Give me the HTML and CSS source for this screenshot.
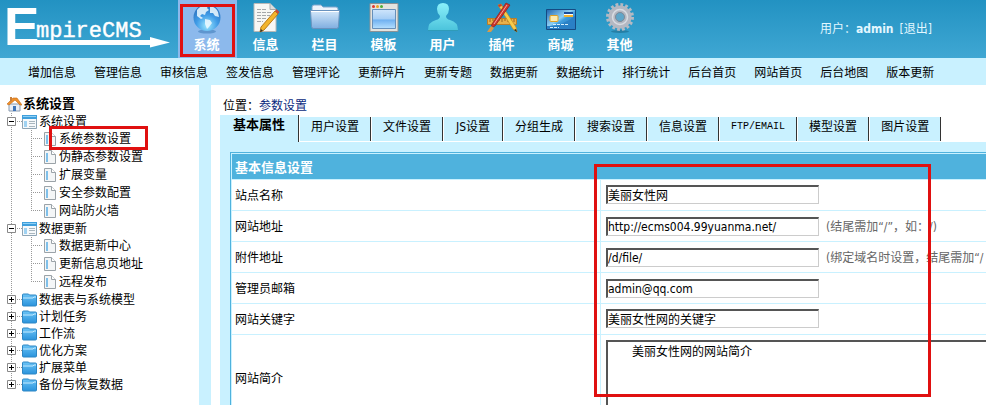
FILE: index.html
```html
<!DOCTYPE html>
<html lang="zh-CN">
  <head>
    <meta charset="UTF-8" />
    <meta name="viewport" content="width=device-width, initial-scale=1.0" />
    <title>EmpireCMS</title>
    <link rel="stylesheet" href="styles.css">
  </head>
  <body>
    <!-- shared tree icons -->
    <svg class="sprite" aria-hidden="true">
      <defs>
        <linearGradient id="gFolder" x1="0" y1="0" x2="0" y2="1"><stop offset="0" stop-color="#6cc4f6" /><stop offset="1" stop-color="#2a93dc" /></linearGradient>
        <radialGradient id="gGlobe" cx=".5" cy=".8" r=".8"><stop offset="0" stop-color="#9be8ff" /><stop offset="0.5" stop-color="#3f9be6" /><stop offset="1" stop-color="#2a6cb8" /></radialGradient>
        <linearGradient id="gDir" x1="0" y1="0" x2="0" y2="1"><stop offset="0" stop-color="#d5e8fa" /><stop offset="1" stop-color="#7faee0" /></linearGradient>
        <linearGradient id="gWin" x1="0" y1="0" x2="0" y2="1"><stop offset="0" stop-color="#cfe5fb" /><stop offset="0.5" stop-color="#a5cdf5" /><stop offset="0.55" stop-color="#6fb0f0" /><stop offset="1" stop-color="#b5e0ff" /></linearGradient>
        <linearGradient id="gUser" x1="0" y1="0" x2="0" y2="1"><stop offset="0" stop-color="#8af0fa" /><stop offset="1" stop-color="#4cc4dc" /></linearGradient>
        <linearGradient id="gCard" x1="0" y1="0" x2="1" y2="1"><stop offset="0" stop-color="#1d64ae" /><stop offset="0.45" stop-color="#8fd0f5" /><stop offset="0.55" stop-color="#3f9ddd" /><stop offset="1" stop-color="#1b66b4" /></linearGradient>
      </defs>
      <symbol id="plus" viewBox="0 0 9 9"><path d="M.5.5h8v8h-8z" fill="#fff" stroke="#888" /><path d="M2 4.5h5M4.5 2v5" stroke="#000" /></symbol>
      <symbol id="minus" viewBox="0 0 9 9"><path d="M.5.5h8v8h-8z" fill="#fff" stroke="#888" /><path d="M2 4.5h5" stroke="#000" /></symbol>
      <symbol id="panel" viewBox="0 0 15 14">
        <path d="M.5.5h14v13H.5z" fill="#f6f9fb" stroke="#8fa5b5" />
        <path d="M0 0h15v4H0z" fill="#3f9fdc" /><path d="M1 1h13v1H1z" fill="#8ed0f5" />
        <path d="M2 6h3v6H2z" fill="#9fd2f2" /><path d="M7 6.5h6M7 8.5h6M7 11.5h6" stroke="#a9b6be" />
      </symbol>
      <symbol id="folder" viewBox="0 0 15 13">
        <path d="M.5 1.500q0-1 1-1h5l1 1h6q1 0 1 1v9q0 1-1 1h-12q-1 0-1-1z" fill="url(#gFolder)" stroke="#2c86c4" />
        <path d="M1 4.500h10l1-1h2" fill="none" stroke="#c5ebff" />
      </symbol>
      <symbol id="page" viewBox="0 0 12 14">
        <path d="M.5.500h7l4 4v9H.5z" fill="#f4f6f7" stroke="#9ba3a8" />
        <path d="M7.500.500v4h4" fill="#fff" stroke="#9ba3a8" />
        <path d="M2 3h2v9H2z" fill="#7fc0ea" />
      </symbol>
    </svg>

    <header class="topbar">
      <a href="#" class="logo" aria-label="EmpireCMS">
        <svg width="172" height="58" viewBox="0 0 172 58">
          <text class="logo-initial" x="4" y="45">E</text>
          <text class="logo-text" x="36" y="37">mpireCMS</text>
          <path d="M8 40h142v-3l20 5.500-20 5v-2.500H8z" fill="#fff" />
        </svg>
      </a>
      <nav class="modules">
        <a href="#" class="module active">
          <svg width="32" height="32" viewBox="0 0 32 32">
            <ellipse cx="16" cy="29.500" rx="9" ry="2" fill="#5f96cf" />
            <circle cx="16" cy="15.500" r="13.500" fill="url(#gGlobe)" />
            <path d="M6 8q3-4 8-5l3 1-1 2 2 2-3 2-1 3-3-1-2 2 3 2-2 1-4-3zM19 4q6 1 8 6l1 5-4-1-2-3-3 0 0-3zM14 17l5 1 2 3-3 4-2 2-2-5z" fill="#eefaff" opacity=".85" />
          </svg>
          <span>系统</span>
        </a>
        <a href="#" class="module">
          <svg width="32" height="32" viewBox="0 0 32 32">
            <path d="M4 1.500h16l6 6v22H4z" fill="#f7f7f4" stroke="#b7b9b8" />
            <path d="M20 1.500v6h6" fill="#ddd" stroke="#aaa" />
            <path d="M7 7.500h10M7 10.500h14M7 13.500h13M7 16.500h9M7 19.500h6" stroke="#a5a8aa" stroke-dasharray="4 1" />
            <path d="M25 9l3 3-14 16-4 2 1-5z" fill="#f3b52c" stroke="#b97a16" /><path d="M25 9l3 3 1.500-2-3-3z" fill="#c64b3c" /><path d="M10 30l1-3 2 2z" fill="#333" />
          </svg>
          <span>信息</span>
        </a>
        <a href="#" class="module">
          <svg width="32" height="32" viewBox="0 0 32 32">
            <path d="M3 5q0-2 2-2h7l2 2h13q2 0 2 2v5H3z" fill="#eaf3fb" stroke="#7da6cd" />
            <path d="M1.500 8.500h29l-1 16q0 2-2 2h-23q-2 0-2-2z" fill="url(#gDir)" stroke="#6992be" />
            <path d="M2 9.500h28" stroke="#fff" />
          </svg>
          <span>栏目</span>
        </a>
        <a href="#" class="module">
          <svg width="32" height="32" viewBox="0 0 32 32">
            <path d="M2 1.500h28v28H2z" fill="#e3e3df" stroke="#8a9296" />
            <path d="M4.500 7.500h23v19h-23z" fill="url(#gWin)" stroke="#6790ba" />
            <circle cx="5.500" cy="4.500" r="1.500" fill="#e0352c" /><circle cx="9.500" cy="4.500" r="1.500" fill="#e9a321" /><circle cx="13.500" cy="4.500" r="1.500" fill="#4fae35" />
          </svg>
          <span>模板</span>
        </a>
        <a href="#" class="module">
          <svg width="32" height="32" viewBox="0 0 32 32">
            <path d="M1 28q0-8 8-10 4-1 4-4-3-3-3-7 0-6 6-6t6 6q0 4-3 7 0 3 4 4 8 2 8 10z" fill="url(#gUser)" />
            <path d="M1 28h30v1H1z" fill="#2f9bb8" />
          </svg>
          <span>用户</span>
        </a>
        <a href="#" class="module">
          <svg width="32" height="32" viewBox="0 0 32 32">
            <path d="M1.500 16.500h29v6h-29z" fill="#e8b04a" stroke="#b87d28" /><path d="M4 17v3M7 17v2M10 17v3M13 17v2M16 17v3M19 17v2M22 17v3M25 17v2M28 17v3" stroke="#9a621c" />
            <path d="M12 3l3-1 15 23 1 5-4-3z" fill="#f8cb4c" stroke="#c08a1e" stroke-width=".7" /><path d="M31 30l-3-2 2-1z" fill="#222" /><path d="M12 3l3-1 1 2-3 1z" fill="#c63a32" />
            <path d="M20 1l4 2L9 24l-4 2 1-4z" fill="#cf352c" stroke="#8d1f1a" stroke-width=".7" /><path d="M21 3L8 22" stroke="#f0a8a0" /><path d="M5 24l3 2-3 4-4 0z" fill="#d89b4a" />
          </svg>
          <span>插件</span>
        </a>
        <a href="#" class="module">
          <svg width="32" height="32" viewBox="0 0 32 32">
            <path d="M1.500 7.500h29v20h-29z" fill="url(#gCard)" stroke="#154a83" />
            <path d="M2 24q14 1 28-10v13H2z" fill="#2a80c6" />
            <rect x="5" y="13.500" width="8" height="6" rx="1" fill="#fbeab0" stroke="#e0a020" /><path d="M19 10h9v2h-9z" fill="#1a4f9c" /><path d="M19 12h9v1h-9z" fill="#fff" /><path d="M19 13h9v2h-9z" fill="#f2b430" />
            <path d="M8 22.500h16M5 25.500h9" stroke="#d5effc" stroke-dasharray="3 1" />
          </svg>
          <span>商城</span>
        </a>
        <a href="#" class="module">
          <svg width="32" height="32" viewBox="0 0 32 32">
            <ellipse cx="16" cy="29.500" rx="9" ry="1.500" fill="#257fa5" />
            <circle cx="16" cy="15" r="12" fill="none" stroke="#b5b9c2" stroke-width="4" stroke-dasharray="2.700 2.015" />
            <circle cx="16" cy="15" r="8" fill="none" stroke="#b4b8c2" stroke-width="7" />
            <circle cx="16" cy="15" r="7.500" fill="none" stroke="#d9dce2" stroke-width="1.500" />
            <circle cx="16" cy="15" r="4.500" fill="#5fa6c9" stroke="#858a95" />
          </svg>
          <span>其他</span>
        </a>
      </nav>
      <div class="account">用户：<b>admin</b><a href="#">[退出]</a></div>
    </header>

    <nav class="shortcuts">
      <a href="#">增加信息</a>
      <a href="#">管理信息</a>
      <a href="#">审核信息</a>
      <a href="#">签发信息</a>
      <a href="#">管理评论</a>
      <a href="#">更新碎片</a>
      <a href="#">更新专题</a>
      <a href="#">数据更新</a>
      <a href="#">数据统计</a>
      <a href="#">排行统计</a>
      <a href="#">后台首页</a>
      <a href="#">网站首页</a>
      <a href="#">后台地图</a>
      <a href="#">版本更新</a>
    </nav>

    <div class="workspace">
      <aside class="sidebar">
        <div class="tree-title">
          <svg width="15" height="16" viewBox="0 0 15 16">
            <path d="M2 8h11v7H2z" fill="#e9eef5" stroke="#8a9bb0" />
            <path d="M0 8l6-6 4 0 5 7-2 0-5-5-6 5z" fill="#f0902a" stroke="#c46a14" stroke-width=".6" />
            <path d="M3 1h2v4l-2 1z" fill="#c9803c" /><path d="M6 10h3v5H6z" fill="#3f75b8" />
          </svg>
          系统设置
        </div>
        <ul class="tree">
          <li>
            <div class="branch"><button type="button" aria-label="收起"><svg><use href="#minus" /></svg></button><svg class="branch-icon"><use href="#panel" /></svg><a href="#">系统设置</a></div>
            <ul class="leaves">
              <li class="marked"><svg><use href="#page" /></svg><a href="#">系统参数设置</a></li>
              <li><svg><use href="#page" /></svg><a href="#">伪静态参数设置</a></li>
              <li><svg><use href="#page" /></svg><a href="#">扩展变量</a></li>
              <li><svg><use href="#page" /></svg><a href="#">安全参数配置</a></li>
              <li><svg><use href="#page" /></svg><a href="#">网站防火墙</a></li>
            </ul>
          </li>
          <li>
            <div class="branch"><button type="button" aria-label="收起"><svg><use href="#minus" /></svg></button><svg class="branch-icon"><use href="#panel" /></svg><a href="#">数据更新</a></div>
            <ul class="leaves">
              <li><svg><use href="#page" /></svg><a href="#">数据更新中心</a></li>
              <li><svg><use href="#page" /></svg><a href="#">更新信息页地址</a></li>
              <li><svg><use href="#page" /></svg><a href="#">远程发布</a></li>
            </ul>
          </li>
          <li><div class="branch"><button type="button" aria-label="展开"><svg><use href="#plus" /></svg></button><svg class="branch-icon"><use href="#folder" /></svg><a href="#">数据表与系统模型</a></div></li>
          <li><div class="branch"><button type="button" aria-label="展开"><svg><use href="#plus" /></svg></button><svg class="branch-icon"><use href="#folder" /></svg><a href="#">计划任务</a></div></li>
          <li><div class="branch"><button type="button" aria-label="展开"><svg><use href="#plus" /></svg></button><svg class="branch-icon"><use href="#folder" /></svg><a href="#">工作流</a></div></li>
          <li><div class="branch"><button type="button" aria-label="展开"><svg><use href="#plus" /></svg></button><svg class="branch-icon"><use href="#folder" /></svg><a href="#">优化方案</a></div></li>
          <li><div class="branch"><button type="button" aria-label="展开"><svg><use href="#plus" /></svg></button><svg class="branch-icon"><use href="#folder" /></svg><a href="#">扩展菜单</a></div></li>
          <li><div class="branch"><button type="button" aria-label="展开"><svg><use href="#plus" /></svg></button><svg class="branch-icon"><use href="#folder" /></svg><a href="#">备份与恢复数据</a></div></li>
        </ul>
      </aside>

      <main class="content">
        <div class="position">位置：<a href="#">参数设置</a></div>
        <div class="tabs" role="tablist">
          <button type="button" role="tab" class="tab current" aria-selected="true">基本属性</button>
          <button type="button" role="tab" class="tab">用户设置</button>
          <button type="button" role="tab" class="tab">文件设置</button>
          <button type="button" role="tab" class="tab">JS设置</button>
          <button type="button" role="tab" class="tab">分组生成</button>
          <button type="button" role="tab" class="tab">搜索设置</button>
          <button type="button" role="tab" class="tab">信息设置</button>
          <button type="button" role="tab" class="tab latin">FTP/EMAIL</button>
          <button type="button" role="tab" class="tab">模型设置</button>
          <button type="button" role="tab" class="tab">图片设置</button>
        </div>
        <form class="tab-page">
          <table class="settings">
            <colgroup>
              <col class="col-name" />
              <col />
            </colgroup>
            <thead>
              <tr><th colspan="2">基本信息设置</th></tr>
            </thead>
            <tbody>
              <tr>
                <td class="name"><label for="sitename">站点名称</label></td>
                <td><input type="text" id="sitename" value="美丽女性网" /></td>
              </tr>
              <tr>
                <td class="name"><label for="newsurl">网站地址</label></td>
                <td><input type="text" id="newsurl" value="http://ecms004.99yuanma.net/" /><span class="hint">(结尾需加“/”，如：/)</span></td>
              </tr>
              <tr>
                <td class="name"><label for="fileurl">附件地址</label></td>
                <td><input type="text" id="fileurl" value="/d/file/" /><span class="hint">(绑定域名时设置，结尾需加“/</span></td>
              </tr>
              <tr>
                <td class="name"><label for="email">管理员邮箱</label></td>
                <td><input type="text" id="email" value="admin@qq.com" /></td>
              </tr>
              <tr>
                <td class="name"><label for="sitekey">网站关键字</label></td>
                <td><input type="text" id="sitekey" value="美丽女性网的关键字" /></td>
              </tr>
              <tr>
                <td class="name"><label for="siteintro">网站简介</label></td>
                <td><textarea id="siteintro" rows="4">美丽女性网的网站简介</textarea></td>
              </tr>
            </tbody>
          </table>
          <div class="mark mark-form"></div>
        </form>
      </main>
    </div>
  </body>
</html>
```

FILE: styles.css
```css
*,
*::after {
  box-sizing: border-box;
}
body {
  margin: 0;
  min-height: 100vh;
  display: flex;
  flex-direction: column;
  overflow: hidden;
  font-family: "DejaVu Sans Condensed", "Noto Sans CJK SC", sans-serif;
  font-size: 12px;
  line-height: 18px;
  color: #000;
  background-color: #fff;
}
a {
  color: inherit;
  text-decoration: none;
}
a:hover {
  text-decoration: underline;
}
ul {
  margin: 0;
  padding: 0;
  list-style: none;
}
button {
  font: inherit;
  color: inherit;
  padding: 0;
  border: 0;
  background: none;
  cursor: pointer;
}
svg {
  display: block;
  flex: none;
}
.sprite {
  position: absolute;
  width: 0;
  height: 0;
}

/* top bar */
.topbar {
  display: flex;
  height: 58px;
  flex: none;
  background: linear-gradient(#2292c2, #3fa7d3);
  color: #fff;
}
.logo {
  width: 178px;
}
.logo svg {
  overflow: visible;
}
.logo-initial {
  font: bold 53px "Liberation Sans", sans-serif;
  fill: #fff;
}
.logo-text {
  font: 22px "Liberation Mono", monospace;
  fill: #fff;
  stroke: #fff;
  stroke-width: 0.4;
}
.modules {
  display: flex;
}
.module {
  position: relative;
  width: 59px;
  display: flex;
  flex-direction: column;
  align-items: center;
  padding: 2px 2px 0 0;
  font-size: 13px;
  font-weight: bold;
}
.module span {
  margin-top: 2px;
}
.module.active {
  background-color: #8cb9ec;
}
.account {
  margin-left: auto;
  padding: 20px 54px 0 0;
  color: #e2f7ff;
}
.account a {
  margin-left: 6px;
}
.shortcuts {
  display: flex;
  flex: none;
  gap: 18px;
  height: 27px;
  padding: 6px 0 0 28px;
  background-color: #c9f1ff;
  white-space: nowrap;
}

/* red highlight frames */
.module.active::after,
.marked::after,
.mark {
  content: "";
  position: absolute;
  border: 3px solid #e01010;
  pointer-events: none;
}
.module.active::after {
  inset: 4px 2px 1px 2px;
}
.marked::after {
  left: 49px;
  top: -4px;
  width: 99px;
  height: 24px;
}
.mark-form {
  left: 374px;
  top: 22px;
  width: 337px;
  height: 233px;
}

.workspace {
  display: flex;
  flex: 1;
}

/* menu tree */
.sidebar {
  width: 199px;
  flex: none;
  padding-top: 10px;
}
.tree-title {
  display: flex;
  align-items: center;
  gap: 1px;
  padding-left: 7px;
  font-size: 13px;
  font-weight: bold;
}
.tree {
  background: repeating-linear-gradient(#999 0 1px, transparent 1px 2px) 11px 0 / 1px calc(100% - 9px) no-repeat;
}
.branch {
  display: flex;
  align-items: center;
  height: 17px;
  padding-left: 7px;
  background: repeating-linear-gradient(90deg, #999 0 1px, transparent 1px 2px) 17px 8px / 5px 1px no-repeat;
}
.branch button svg {
  width: 9px;
  height: 9px;
}
.branch-icon {
  width: 15px;
  height: 14px;
  margin: 0 2px 0 6px;
}
.leaves {
  background: repeating-linear-gradient(#999 0 1px, transparent 1px 2px) 31px 0 / 1px calc(100% - 9px) no-repeat;
}
.leaves li {
  position: relative;
  display: flex;
  align-items: center;
  gap: 3px;
  height: 18px;
  padding-left: 44px;
  background: repeating-linear-gradient(90deg, #999 0 1px, transparent 1px 2px) 33px 8px / 9px 1px no-repeat;
}
.leaves svg {
  width: 12px;
  height: 14px;
}

/* settings page */
.content {
  flex: 1;
  min-width: 0;
  display: flex;
  flex-direction: column;
  padding: 12px 0 0 9px;
  border-left: 12px solid #c9f1ff;
}
.position {
  padding-left: 3px;
  height: 18px;
}
.position a {
  color: #0a2a80;
}
.tabs {
  display: flex;
  align-items: flex-start;
  height: 27px;
}
.tab {
  min-width: 60px;
  height: 24px;
  margin-top: 2px;
  padding: 0 11px 4px;
  border-left: 1px solid #fff;
  border-right: 1px solid #333;
  background-color: #c9f1ff;
  white-space: nowrap;
}
.tab.current {
  height: 27px;
  margin-top: 0;
  padding: 0 13px 7px;
  border-left: 0;
  font-size: 13px;
  font-weight: bold;
}
.tab.latin {
  font-family: "Liberation Mono", monospace;
  font-size: 10px;
}
.tab-page {
  position: relative;
  flex: 1;
  padding: 10px 0 0 10px;
  overflow: hidden;
  background-color: #c9f1ff;
}
.settings {
  width: 100%;
  min-width: 1000px;
  table-layout: fixed;
  border: 1px solid #4fb2dd;
  border-spacing: 1px;
  background-color: #c9f1ff;
}
.col-name {
  width: 368px;
}
.settings th {
  height: 25px;
  padding: 2px 3px 0;
  background-color: #4fb2dd;
  color: #fff;
  font-size: 13px;
  text-align: left;
}
.settings td {
  height: 30px;
  padding: 0 5px;
  background-color: #fff;
  white-space: nowrap;
}
.settings .name {
  padding: 2px 3px 0;
}
.settings input,
.settings textarea {
  border: 1px solid #ccc;
  border-top: 2px solid #555;
  border-left: 2px solid #555;
  background-color: #fff;
  font: inherit;
  color: #000;
}
.settings input {
  width: 213px;
  height: 19px;
  padding: 0;
}
.settings textarea {
  display: block;
  width: 100%;
  height: 76px;
  margin: 5px 0;
  padding: 0;
  line-height: 20px;
  text-indent: 24px;
  resize: none;
}
.hint {
  margin-left: 7px;
  color: #666;
}
```
